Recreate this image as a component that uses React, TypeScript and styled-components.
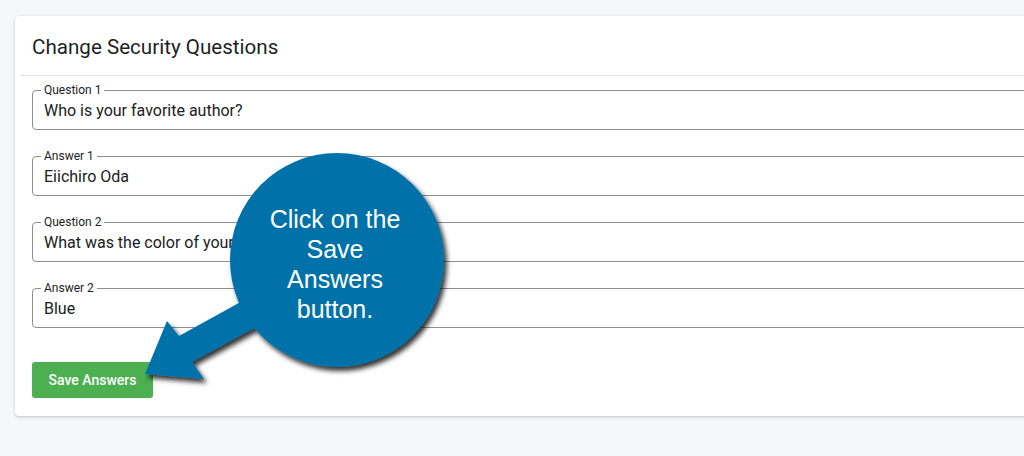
import React from "react";
import styled, { createGlobalStyle } from "styled-components";

const Global = createGlobalStyle`
  html, body { margin: 0; padding: 0; background: #f6f7fb; overflow: hidden; }
  body { font-family: Roboto, "Noto Sans", Arial, sans-serif; }
`;

const Stage = styled.div`
  position: relative;
  width: 1024px;
  height: 456px;
  overflow: hidden;
  background: #f6f7fb;
  padding: 16px 0 0 15px;
  box-sizing: border-box;
`;

const Card = styled.section`
  width: 1040px;
  background: #ffffff;
  border-radius: 4px;
  box-shadow: 0 1px 3px rgba(0, 0, 0, 0.22), 0 0 1px rgba(0, 0, 0, 0.08);
  padding-bottom: 18px;
`;

const Header = styled.header`
  height: 59px;
  display: flex;
  align-items: center;
  border-bottom: 1px solid #e2e2e2;
  margin-left: 5px;
  padding-left: 12px;
`;

const Title = styled.h2`
  margin: 0;
  font-family: Roboto, sans-serif;
  font-weight: 400;
  font-size: 20.6px;
  color: #1f1f1f;
  padding-top: 2px;
`;

const Form = styled.form`
  display: flex;
  flex-direction: column;
  gap: 26px;
  padding: 14px 0 0 17px;
`;

const Field = styled.div`
  position: relative;
  height: 40px;
  box-sizing: border-box;
  border: 1px solid #8e8e8e;
  border-radius: 4px;
  display: flex;
  align-items: center;
  padding-left: 11px;
`;

const Label = styled.span`
  position: absolute;
  top: -8px;
  left: 8px;
  padding: 0 3px;
  background: #ffffff;
  font-size: 12px;
  line-height: 14px;
  color: #1c1c1c;
`;

const Value = styled.span`
  font-size: 16px;
  line-height: 19px;
  color: #212121;
`;

const ButtonRow = styled.div`
  padding: 34px 0 0 17px;
`;

const SaveButton = styled.button`
  width: 121px;
  height: 36px;
  border: none;
  border-radius: 3px;
  background: #4caf50;
  color: #ffffff;
  font-family: Roboto, sans-serif;
  font-weight: 500;
  font-size: 14px;
  padding: 0;
`;

const Callout = styled.div`
  position: absolute;
  left: 0;
  top: 0;
  width: 1024px;
  height: 456px;
  pointer-events: none;
`;

const CalloutText = styled.div`
  position: absolute;
  left: 235px;
  top: 204px;
  width: 200px;
  text-align: center;
  font-family: "Liberation Sans", Arial, sans-serif;
  font-size: 25px;
  line-height: 30px;
  color: #ffffff;
`;

const fields = [
  { label: "Question 1", value: "Who is your favorite author?" },
  { label: "Answer 1", value: "Eiichiro Oda" },
  { label: "Question 2", value: "What was the color of your first car?" },
  { label: "Answer 2", value: "Blue" },
];

export default function App() {
  return (
    <>
      <Global />
      <Stage>
        <Card>
          <Header>
            <Title>Change Security Questions</Title>
          </Header>
          <Form onSubmit={(e) => e.preventDefault()}>
            {fields.map((f) => (
              <Field key={f.label}>
                <Label>{f.label}</Label>
                <Value>{f.value}</Value>
              </Field>
            ))}
          </Form>
          <ButtonRow>
            <SaveButton type="button">Save Answers</SaveButton>
          </ButtonRow>
        </Card>
        <Callout>
          <svg width="1024" height="456" viewBox="0 0 1024 456">
            <defs>
              <filter id="sh" x="-20%" y="-20%" width="140%" height="140%">
                <feDropShadow dx="3" dy="4" stdDeviation="2.5" floodColor="#000" floodOpacity="0.8" />
              </filter>
            </defs>
            <g filter="url(#sh)" fill="#0572a9">
              <circle cx="337" cy="260" r="107" />
              <polygon points="145,374 167,321 179,336 246,299 258,326 192,362 204,379" />
            </g>
          </svg>
          <CalloutText>
            Click on the
            <br />
            Save
            <br />
            Answers
            <br />
            button.
          </CalloutText>
        </Callout>
      </Stage>
    </>
  );
}
